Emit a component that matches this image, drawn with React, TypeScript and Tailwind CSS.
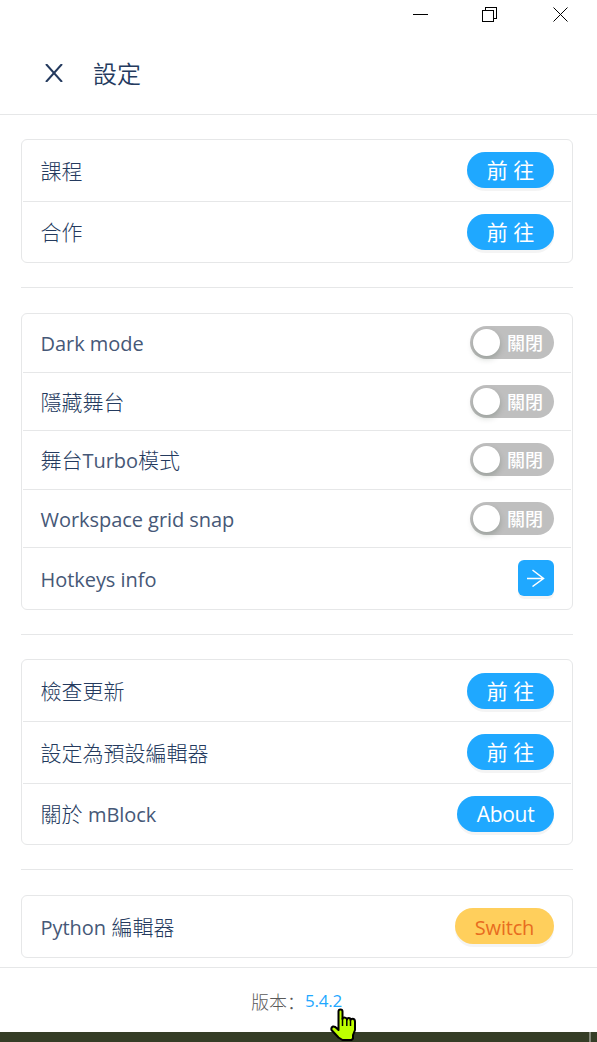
import { ReactNode, useState } from "react";
import clsx from "clsx";

type RowProps = {
  label: ReactNode;
  className?: string;
  labelClassName?: string;
  children: ReactNode;
};

const Row = ({
  label,
  className = "h-[62px]",
  labelClassName = "pt-px",
  children,
}: RowProps) => (
  <div
    className={clsx(
      "flex items-start justify-between border-b border-[#e6e7e8] pt-3 pr-[17px] pl-[17.5px] last:border-b-0",
      className,
    )}
  >
    <span
      className={clsx(
        "text-[21px] leading-9 font-light whitespace-pre",
        labelClassName,
      )}
    >
      {label}
    </span>
    {children}
  </div>
);

// latin text is a touch smaller and heavier than the chinese text around it
const Latin = ({ children }: { children: string }) => (
  <span className="text-[20px] font-normal tracking-[-0.05px] text-[#465877]">
    {children}
  </span>
);

const Group = ({ children }: { children: ReactNode }) => (
  <section className="rounded-md border border-[#e6e7e8] px-px">
    {children}
  </section>
);

const Divider = ({ className = "mb-[25px]" }: { className?: string }) => (
  <hr className={clsx("mt-6 border-t border-[#e6e7e8]", className)} />
);

type PillProps = {
  className?: string;
  children: ReactNode;
};

const Pill = ({
  className = "w-[87px] bg-[#1fa8ff] text-[21px] text-white",
  children,
}: PillProps) => (
  <button
    className={clsx(
      "h-9 shrink-0 rounded-full text-center leading-9 shadow-[0_3px_0_rgba(0,0,0,0.045)]",
      className,
    )}
  >
    {children}
  </button>
);

const Toggle = () => {
  const [on, setOn] = useState(false);
  return (
    <button
      role="switch"
      aria-checked={on}
      onClick={() => setOn(!on)}
      className={clsx(
        "flex h-[33px] w-[84px] items-center gap-[7px] rounded-full px-[3px] text-lg leading-none font-medium text-white",
        on ? "flex-row-reverse bg-[#1fa8ff]" : "bg-[#bfbfbf]",
      )}
    >
      <span className="size-[27px] shrink-0 rounded-full bg-white shadow-[0_3px_6px_rgba(0,35,11,0.2)]" />
      <span>{on ? "開啟" : "關閉"}</span>
    </button>
  );
};

const WindowControls = () => (
  <div className="flex h-7 items-center justify-end pr-[28px]">
    <svg
      width="156"
      height="16"
      viewBox="0 0 156 16"
      fill="none"
      stroke="#000"
      shapeRendering="crispEdges"
    >
      <path d="M0 8.500h15" />
      <path d="M69.500 4.500h11v11h-11z" />
      <path d="M72.500 4.500v-3h11v11h-3" />
      <path d="M140.500 1.500l14 14M154.500 1.500l-14 14" shapeRendering="auto" />
    </svg>
  </div>
);

const HandCursor = () => (
  <svg
    width="28"
    height="34"
    viewBox="0 0 28 34"
    className="absolute top-[1008px] left-[330px]"
  >
    <path
      d="M8.500 3.500q0-2 2-2t2 2V11q0-1.500 1.700-1.500T17 11v.5q0-1.500 1.800-1.500t1.700 2q.3-1.300 2-1.300 2.500 0 2.500 3V22l-2 5v3.500l-1.500 1.500h-9L8.500 29.500 1.500 22q-.7-2.500 1.500-3.500 2-.3 4 2l1.500 1.500z"
      fill="#bfff00"
      stroke="#000"
      strokeWidth="2"
      strokeLinejoin="round"
    />
    <path d="M12.500 10v8M16.800 11v7M20.500 11.500V18" stroke="#000" strokeWidth="1.500" />
  </svg>
);

const App = () => (
  <div className="relative flex h-[1042px] w-[597px] flex-col overflow-hidden bg-white font-['Open_Sans','Noto_Sans_CJK_TC',sans-serif] text-[#243a5e]">
    <WindowControls />
    <header className="flex h-[87px] items-center border-b border-[#e6e7e8] pt-1 pl-[45px]">
      <svg width="18" height="18" viewBox="0 0 18 18" stroke="#243a5e" strokeWidth="2">
        <path d="M1 0l16 18M17 0L1 18" />
      </svg>
      <h1 className="ml-[30px] pt-px text-2xl leading-9 font-[350]">設定</h1>
    </header>

    <main className="h-[852px] pt-6 pr-6 pl-[21px]">
      <Group>
        <Row label="課程">
          <Pill>前 往</Pill>
        </Row>
        <Row label="合作" className="h-[60px]" labelClassName="pt-0">
          <Pill>前 往</Pill>
        </Row>
      </Group>
      <Divider />
      <Group>
        <Row
          label={<Latin>Dark mode</Latin>}
          className="h-[59px]"
          labelClassName="-mt-px"
        >
          <Toggle />
        </Row>
        <Row label="隱藏舞台" className="h-[58px]" labelClassName="-mt-px">
          <Toggle />
        </Row>
        <Row
          label={
            <>
              舞台<Latin>Turbo</Latin>模式
            </>
          }
          className="h-[59px]"
          labelClassName="-mt-px"
        >
          <Toggle />
        </Row>
        <Row
          label={<Latin>Workspace grid snap</Latin>}
          className="h-[58px]"
          labelClassName="-mt-px"
        >
          <Toggle />
        </Row>
        <Row label={<Latin>Hotkeys info</Latin>} className="h-[61px]">
          <button className="flex size-9 items-center justify-center rounded-md bg-[#1fa8ff] shadow-[0_3px_0_rgba(0,0,0,0.045)]">
            <svg width="18" height="18" viewBox="0 0 18 18" fill="none" stroke="#fff" strokeWidth="1.500">
              <path d="M0 9.500h17M5.500 1l11 8.500-11 8" />
            </svg>
          </button>
        </Row>
      </Group>
      <Divider className="mb-6" />
      <Group>
        <Row label="檢查更新">
          <Pill className="mt-px w-[87px] bg-[#1fa8ff] text-[21px] text-white">
            前 往
          </Pill>
        </Row>
        <Row label="設定為預設編輯器">
          <Pill>前 往</Pill>
        </Row>
        <Row
          label={
            <>
              關於 <Latin>mBlock</Latin>
            </>
          }
          className="h-[60px]"
          labelClassName="pt-0"
        >
          <Pill className="w-[97px] bg-[#1fa8ff] text-[21px] tracking-[-0.3px] text-white">
            About
          </Pill>
        </Row>
      </Group>
      <Divider />
      <Group>
        <Row
          label={
            <>
              <Latin>Python</Latin> 編輯器
            </>
          }
          className="h-[61px]"
        >
          <Pill className="w-[99px] bg-[#ffcf5c] pt-0.5 text-[20px] tracking-[-0.2px] text-[#e86c1f]">
            Switch
          </Pill>
        </Row>
      </Group>
    </main>

    <footer className="flex h-[65px] items-center border-t border-[#e6e7e8] pt-0.5 pl-[251px] text-lg font-light text-[#595959]">
      <span>
        版本<span className="font-['Noto_Sans_CJK_SC',sans-serif]">：</span>
      </span>
      <a className="pt-px text-[17px] font-normal tracking-[-0.2px] text-[#1fa8ff]">
        5.4.2
      </a>
    </footer>
    <div className="flex h-2.5 justify-end bg-[#353d26] pr-[6px]">
      <div className="w-0.5 bg-[#838779]" />
    </div>
    <HandCursor />
  </div>
);

export default App;
